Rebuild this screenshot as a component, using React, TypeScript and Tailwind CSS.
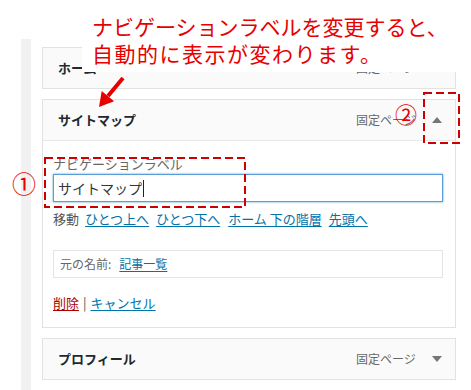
import React from "react";

const JP = { fontFamily: '"Noto Sans CJK JP", "Noto Sans", sans-serif' };

function Caret({ up }: { up?: boolean }) {
  return (
    <svg width="10" height="6" viewBox="0 0 10 6" className="shrink-0">
      {up ? <path d="M5 0 L10 6 L0 6 Z" fill="#72777c" /> : <path d="M0 0 L10 0 L5 6 Z" fill="#72777c" />}
    </svg>
  );
}

function ItemHeader({ title, up }: { title: string; up?: boolean }) {
  return (
    <div className="flex items-center h-[40px] pl-[15px] pr-[13px] bg-[#fafafa]">
      <span className="flex-1 text-[13px] font-bold text-[#23282d] leading-[18px]">{title}</span>
      <span className="text-[12px] text-[#666] leading-[18px] w-[60px]">固定ページ</span>
      <span className="ml-[16px] flex items-center"><Caret up={up} /></span>
    </div>
  );
}

function Link({ children, className = "" }: { children: React.ReactNode; className?: string }) {
  return <a className={`text-[#0073aa] underline underline-offset-2 ${className}`}>{children}</a>;
}

export default function App() {
  return (
    <div className="relative w-[471px] h-[390px] bg-white overflow-hidden" style={JP}>
      <div className="flex h-full pt-[39px]">
        <div className="ml-[21px] w-[10px] bg-[#f1f1f1]" />
        <div className="ml-[11px] w-[414px] pt-[8px] flex flex-col gap-[10px]">
          {/* Home */}
          <div className="border border-[#e2e2e2]">
            <ItemHeader title="ホーム" />
          </div>

          {/* Sitemap (expanded) */}
          <div className="border border-[#e2e2e2]">
            <div className="border-b border-[#e8e8e8]">
              <ItemHeader title="サイトマップ" up />
            </div>
            <div className="bg-white pl-[10px] pr-[12px] pt-[14px] pb-[15px]">
              <div className="text-[13px] leading-[18px] text-[#666]">ナビゲーションラベル</div>
              <div className="mt-[1px] h-[28px] border border-[#5b9dd9] shadow-[0_0_2px_rgba(30,140,190,0.8)] flex items-center pl-[4px] text-[14px] text-[#32373c]">
                サイトマップ<span className="w-px h-[17px] bg-[#222] ml-px" />
              </div>
              <div className="mt-[8px] text-[13px] leading-[18px] text-[#555] flex">
                <span>移動</span>
                <Link className="ml-[6px]">ひとつ上へ</Link>
                <Link className="ml-[7px]">ひとつ下へ</Link>
                <Link className="ml-[8px]">ホーム 下の階層</Link>
                <Link className="ml-[7px]">先頭へ</Link>
              </div>
              <div className="mt-[22px] h-[28px] border border-[#e5e5e5] flex items-center pl-[6px] text-[12px] text-[#666]">
                <span>元の名前:</span>
                <Link className="ml-[8px]">記事一覧</Link>
              </div>
              <div className="mt-[16px] text-[13px] leading-[18px] text-[#555]">
                <a className="text-[#a00] underline underline-offset-2">削除</a>
                <span className="mx-[4px]">|</span>
                <Link>キャンセル</Link>
              </div>
            </div>
          </div>

          {/* Profile */}
          <div className="border border-[#e2e2e2]">
            <ItemHeader title="プロフィール" />
          </div>
          <div className="border border-[#e2e2e2] h-[40px] bg-[#fafafa]" />
        </div>
      </div>

      {/* annotation */}
      <div className="absolute left-[82px] top-0 right-0 h-[72px] bg-white pl-[10px] pt-[13px] text-[21px] leading-[27px] text-[#e60000] whitespace-nowrap">
        <div>ナビゲーションラベルを変更すると、</div>
        <div className="tracking-[1.5px]">自動的に表示が変わります。</div>
      </div>
      <span className="absolute left-[12px] top-[169px] text-[24px] leading-[28px] text-[#e60000]">①</span>
      <span className="absolute left-[395px] top-[100px] text-[22px] leading-[26px] text-[#e60000]">②</span>
      <svg className="absolute inset-0 pointer-events-none" width="471" height="390">
        <rect x="45" y="158" width="200" height="49" fill="none" stroke="#cc0000" strokeWidth="2" strokeDasharray="8 4" />
        <rect x="424" y="93" width="35" height="50" fill="none" stroke="#cc0000" strokeWidth="2" strokeDasharray="8 4" />
        <line x1="123" y1="78" x2="108" y2="96" stroke="#e60000" strokeWidth="4" />
        <polygon points="99,107 114.1,101.3 101.7,91.1" fill="#e60000" />
      </svg>
    </div>
  );
}
